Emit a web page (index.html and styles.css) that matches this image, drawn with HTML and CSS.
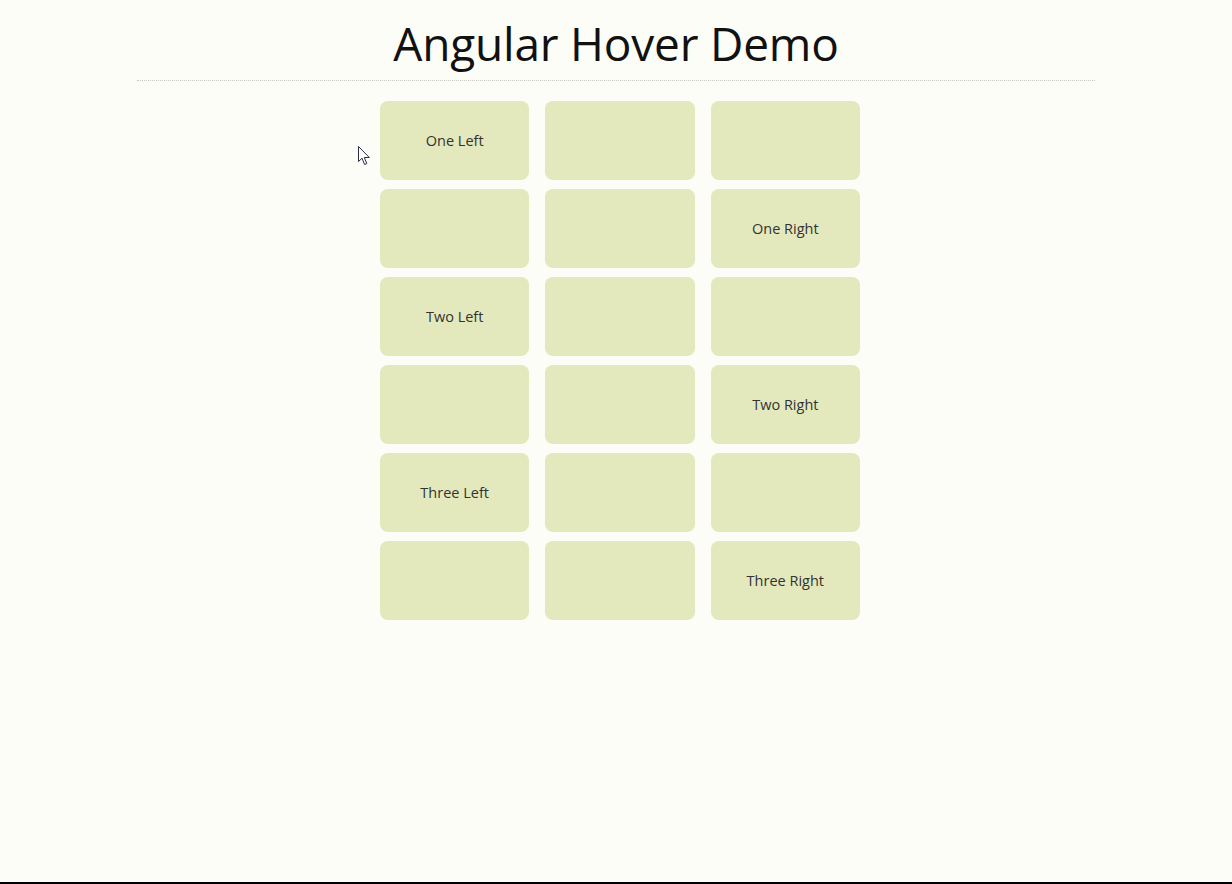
FILE: index.html
```html
<!DOCTYPE html>
<html lang="en">
<head>
<meta charset="utf-8">
<title>Angular Hover Demo</title>
<link rel="stylesheet" href="styles.css">
</head>
<body>
<div class="page">
  <header class="header">
    <h1 class="title">Angular Hover Demo</h1>
  </header>
  <main class="grid">
    <div class="card">One Left</div>
    <div class="card"></div>
    <div class="card"></div>
    <div class="card"></div>
    <div class="card"></div>
    <div class="card">One Right</div>
    <div class="card">Two Left</div>
    <div class="card"></div>
    <div class="card"></div>
    <div class="card"></div>
    <div class="card"></div>
    <div class="card">Two Right</div>
    <div class="card">Three Left</div>
    <div class="card"></div>
    <div class="card"></div>
    <div class="card"></div>
    <div class="card"></div>
    <div class="card">Three Right</div>
  </main>
  <svg class="cursor" width="13" height="20" viewBox="0 0 13 20">
    <path d="M0.5 0.5 L0.5 15.5 L4 12.2 L6.6 18.5 L8.8 17.6 L6.3 11.5 L11.3 11.5 Z" fill="#ffffff" stroke="#2a2a4a" stroke-width="1" stroke-linejoin="round"/>
  </svg>
</div>
</body>
</html>
```
FILE: styles.css
```css
html, body {
  margin: 0;
  padding: 0;
}
body {
  background: #fdfdf7;
  font-family: "Open Sans", "Noto Sans", "Liberation Sans", sans-serif;
  color: #222;
}
.page {
  position: relative;
  box-sizing: border-box;
  height: 884px;
  border-bottom: 2px solid #000;
  overflow: hidden;
}
.header {
  width: 958px;
  margin: 0 auto;
  border-bottom: 1px dotted #c8c8c0;
  text-align: center;
}
.title {
  margin: 0;
  padding-top: 16px;
  height: 80px;
  box-sizing: border-box;
  font-size: 46px;
  font-weight: 400;
  line-height: 1.2;
  color: #111;
  letter-spacing: -0.2px;
}
.grid {
  display: grid;
  grid-template-columns: repeat(3, 1fr);
  grid-auto-rows: 79px;
  column-gap: 16px;
  row-gap: 9px;
  width: 480px;
  margin: 20px 0 0 380px;
}
.card {
  background: #e3e8bd;
  border-radius: 8px;
  display: flex;
  align-items: center;
  justify-content: center;
  font-size: 14.5px;
  color: #333;
}
.cursor {
  position: absolute;
  left: 358px;
  top: 146px;
}
```
